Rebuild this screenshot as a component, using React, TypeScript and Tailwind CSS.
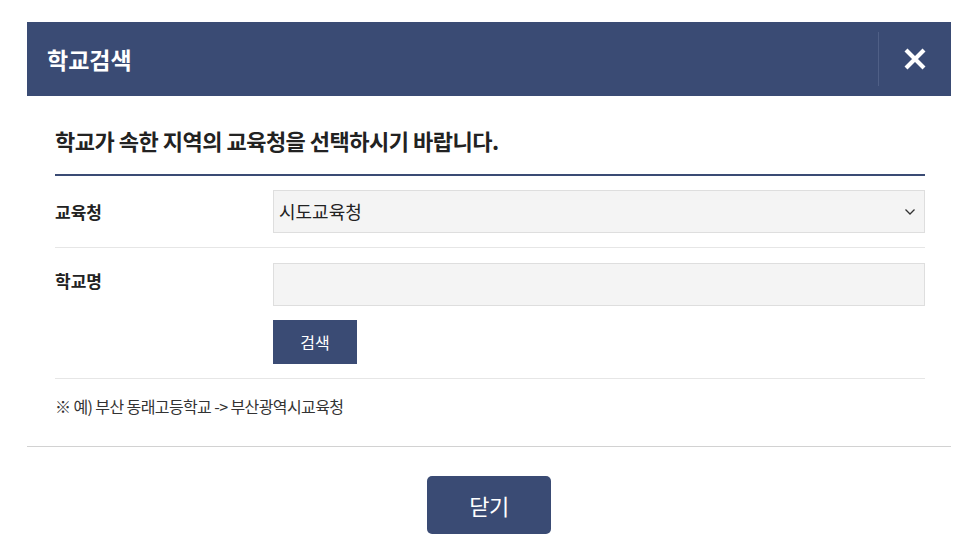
const App = () => {
	return (
		<div
			className="w-[973px] h-[553px] bg-white pt-[22px] px-[22px] pl-[27px] overflow-hidden text-[#222]"
			style={{ fontFamily: '"Noto Sans CJK KR", "Noto Sans", sans-serif' }}
		>
			<div className="w-[924px]">
				{/* header */}
				<div className="h-[74px] bg-[#3a4b74] flex items-center justify-between">
					<h2 className="pl-5 text-white text-[23px] font-bold">학교검색</h2>
					<div className="h-[54px] border-l border-[#4f5f86] w-[73px] flex items-center justify-center">
						<svg width="24" height="24" viewBox="0 0 24 24" className="ml-[-1px]">
							<path d="M3 3 L21 21 M21 3 L3 21" stroke="#fff" strokeWidth="4.2" strokeLinecap="butt" />
						</svg>
					</div>
				</div>

				{/* body */}
				<div className="pl-[28px] pr-[26px] pt-[30px]">
					<p className="text-[22px] font-bold tracking-[-0.5px] leading-[28px] text-[#222]">
						학교가 속한 지역의 교육청을 선택하시기 바랍니다.
					</p>
					<div className="mt-[20px] border-t-2 border-[#3a4b74]">
						<div className="flex items-center py-[14px] border-b border-[#e6e6e6]">
							<span className="w-[218px] text-[17px] font-bold">교육청</span>
							<div className="flex-1 h-[43px] bg-[#f4f4f4] border border-[#dedede] flex items-center justify-between pl-[5px] pr-[8px]">
								<span className="text-[18px] text-[#222]">시도교육청</span>
								<svg width="12" height="8" viewBox="0 0 12 8">
									<path d="M1.5 1.5 L6 6 L10.5 1.5" stroke="#333" strokeWidth="1.3" fill="none" />
								</svg>
							</div>
						</div>
						<div className="flex items-start pt-[15px] pb-[14px] border-b border-[#e6e6e6]">
							<span className="w-[218px] text-[17px] font-bold mt-[5px]">학교명</span>
							<div className="flex-1 flex flex-col gap-[14px]">
								<div className="h-[43px] bg-[#f4f4f4] border border-[#dedede]" />
								<button className="w-[84px] h-[44px] bg-[#3a4b74] text-white text-[16px]">
									검색
								</button>
							</div>
						</div>
						<p className="pt-[15px] text-[16px] tracking-[-0.6px] text-[#333]">※ 예) 부산 동래고등학교 -&gt; 부산광역시교육청</p>
					</div>
				</div>

				<div className="mt-[28px] border-t border-[#d2d2d2] flex justify-center pt-[29px]">
					<button className="w-[124px] h-[58px] rounded-[5px] bg-[#3a4b74] text-white text-[22px] tracking-[-0.5px]">
						닫기
					</button>
				</div>
			</div>
		</div>
	);
};

export default App;
